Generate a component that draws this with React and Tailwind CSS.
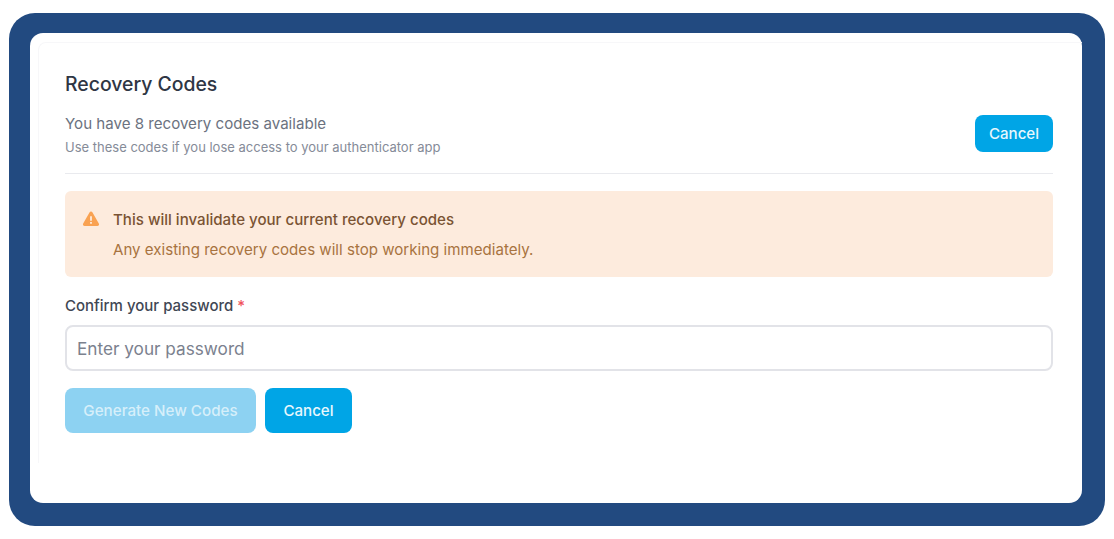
import React from 'react';

const App = () => {
    return (
        <div className="w-[1114px] h-[539px] bg-white pt-[13px] pl-[9px] font-['Inter',sans-serif] overflow-hidden">
            <div className="w-[1096px] h-[513px] bg-[#224a80] rounded-[26px] pt-[20px] pl-[21px]">
                <div className="w-[1052px] h-[470px] bg-white rounded-[13px] pt-[9px] pl-[8px]">
                    <section className="h-[421px] rounded-tl-[8px] border-l border-t border-[#f7f7f9] pl-[26px] pr-[29px] pt-[27px]">
                        <h2 className="text-[19.4px] leading-[28px] font-medium text-[#2f3644]">Recovery Codes</h2>

                        <div className="mt-[16px] pb-[18px] border-b border-[#e9eaee] flex items-start justify-between">
                            <div>
                                <p className="text-[15.1px] leading-[20px] text-[#6b7280]">You have 8 recovery codes available</p>
                                <p className="mt-[5px] text-[13px] leading-[16px] text-[#858b98]">Use these codes if you lose access to your authenticator app</p>
                            </div>
                            <button className="mt-[1px] pt-px w-[78px] h-[37px] rounded-[8px] bg-[#00a5e6] text-[#e8f7fd] text-[15.1px] font-medium">Cancel</button>
                        </div>

                        <div className="mt-[17px] h-[86px] rounded-[6px] bg-[#fdebdd] pl-[17px] pt-[19px] flex gap-[13px]">
                            <svg width="18" height="18" viewBox="0 0 20 20" className="shrink-0">
                                <path fillRule="evenodd" clipRule="evenodd" fill="#f9a252" d="M8.3 2.7c.75-1.3 2.65-1.3 3.4 0l7 12.3c.75 1.3-.2 2.9-1.7 2.9H3c-1.5 0-2.45-1.6-1.7-2.9l7-12.3ZM9 7v5h2V7H9Zm0 6.2v2h2v-2H9Z" />
                            </svg>
                            <div>
                                <p className="text-[15.1px] leading-[20px] font-medium text-[#7a5333]">This will invalidate your current recovery codes</p>
                                <p className="mt-[10px] text-[15.1px] leading-[20px] text-[#a8733f]">Any existing recovery codes will stop working immediately.</p>
                            </div>
                        </div>

                        <label className="block mt-[19px] text-[15px] leading-[20px] font-medium text-[#3f4754]">
                            Confirm your password <span className="text-[#f0525c]">*</span>
                        </label>
                        <input
                            type="password"
                            placeholder="Enter your password"
                            className="block mt-[9px] w-full h-[46px] rounded-[8px] border-2 border-[#e2e3e8] bg-white px-[10px] text-[17.2px] placeholder:text-[#7b818e] outline-none"
                        />

                        <div className="mt-[17px] flex gap-[9px]">
                            <button disabled className="pt-px w-[191px] h-[45px] rounded-[8px] bg-[#8dd2f2] text-[#d6effa] text-[15.2px] font-medium">Generate New Codes</button>
                            <button className="pt-px w-[87px] h-[45px] rounded-[8px] bg-[#00a5e6] text-[#e8f7fd] text-[15.1px] font-medium">Cancel</button>
                        </div>
                    </section>
                </div>
            </div>
        </div>
    );
};

export default App;
